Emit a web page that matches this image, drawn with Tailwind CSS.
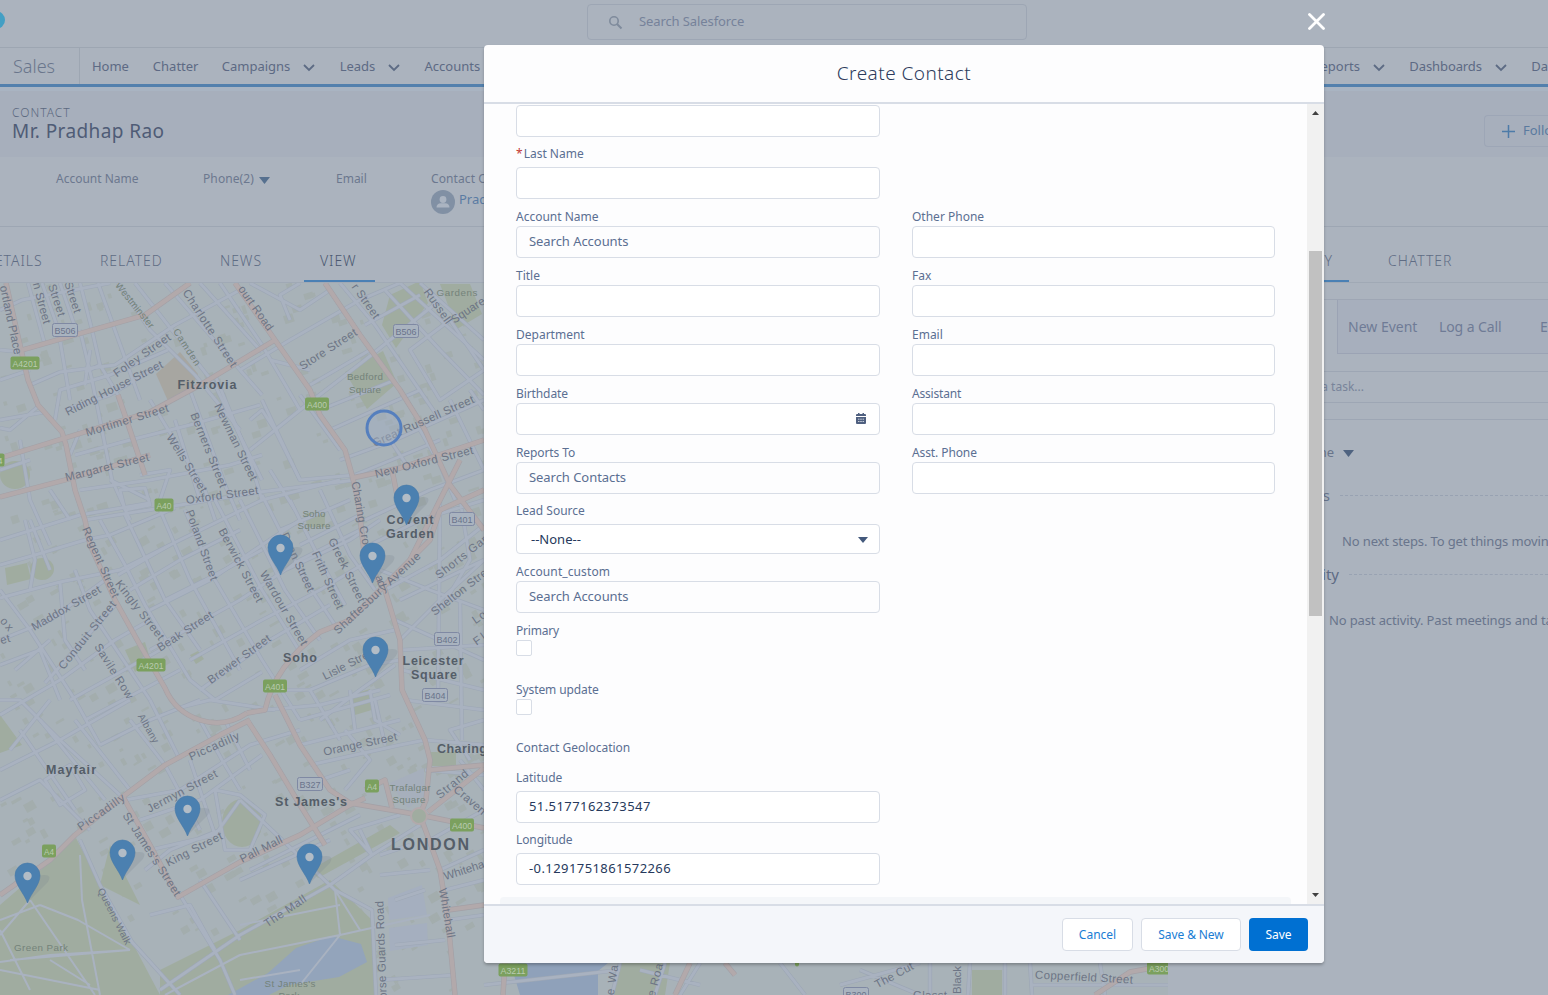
<!DOCTYPE html>
<html lang="en">
<head>
<meta charset="utf-8">
<title>Create Contact</title>
<script src="https://cdn.jsdelivr.net/npm/@tailwindcss/browser@4"></script>
</head>
<body class="relative h-[995px] w-[1548px] overflow-hidden bg-[#abb3be] font-['Noto_Sans',sans-serif] text-[13px] text-[#69758c]">

<!-- Page behind the dialog -->
<div class="flex h-[995px] w-[1548px] flex-col overflow-hidden whitespace-nowrap">
  <header class="flex h-[48px] shrink-0 border-b border-[#9da6b2]">
    <div class="mt-[11px] -ml-[13px] h-[18px] w-[18px] rounded-full bg-[#439fc4]"></div>
    <div class="mt-1 ml-[582px] flex h-9 w-[440px] items-center rounded border border-[#9da6b4] pl-5 text-[#76829a]">
      <svg class="h-[15px] w-[15px]" viewBox="0 0 15 15" fill="none" stroke="#7f8b9c" stroke-width="1.6"><circle cx="6" cy="6" r="4.2"/><path d="M9 9l4.5 4.5" stroke-width="2"/></svg>
      <span class="ml-4 tracking-[-0.1px]">Search Salesforce</span>
    </div>
  </header>
  <nav class="flex h-[39px] shrink-0 items-center border-b-[3px] border-[#5380ad] text-[13px] text-[#5d6a84]">
    <div class="flex h-full w-20 items-center border-r border-[#9da6b2] pl-[13px] text-[18px] font-light text-[#6a768c]">Sales</div>
    <div class="w-[61px] pt-px pl-3">Home</div>
    <div class="w-[69px] pt-px pl-3">Chatter</div>
    <div class="flex w-[118px] items-center pt-px pl-3">Campaigns<svg class="mt-[3px] ml-auto mr-[13px] h-3 w-3" viewBox="0 0 12 12" fill="none" stroke="#5d6b84" stroke-width="1.8"><path d="M1 3l5 5 5-5"/></svg></div>
    <div class="flex w-[85px] items-center pt-px pl-3">Leads<svg class="mt-[3px] ml-auto mr-[13px] h-3 w-3" viewBox="0 0 12 12" fill="none" stroke="#5d6b84" stroke-width="1.8"><path d="M1 3l5 5 5-5"/></svg></div>
    <div class="w-[901px] pt-px pl-3">Accounts</div>
    <div class="flex w-[85px] items-center pt-px">Reports<svg class="mt-[3px] ml-auto mr-[12px] h-3 w-3" viewBox="0 0 12 12" fill="none" stroke="#5d6b84" stroke-width="1.8"><path d="M1 3l5 5 5-5"/></svg></div>
    <div class="flex w-[122px] items-center pt-px pl-3 tracking-[-0.1px]">Dashboards<svg class="mt-[3px] ml-auto mr-[12px] h-3 w-3" viewBox="0 0 12 12" fill="none" stroke="#5d6b84" stroke-width="1.8"><path d="M1 3l5 5 5-5"/></svg></div>
    <div class="pt-px pl-3">Da</div>
  </nav>
  <section class="flex h-[70px] shrink-0 items-start justify-between border-t-4 border-[#a9b4c2] bg-[#a7afbc] pl-3">
    <div class="pt-[13px]">
      <div class="h-[17px] text-[12px] leading-[17px] font-light tracking-[1px] text-[#5c6980]">CONTACT</div>
      <div class="text-[19px] leading-[20px] tracking-[0.4px] text-[#4f5c76]">Mr. Pradhap Rao</div>
    </div>
    <div class="mt-6 flex h-8 w-[64px] items-center overflow-hidden rounded-l border border-r-0 border-[#9da6b6] pl-[17px] text-[#5a7a9f]">
      <svg class="h-[13px] w-[13px] shrink-0" viewBox="0 0 13 13" stroke="#4d7ba8" stroke-width="1.5"><path d="M6.500 0v13M0 6.500h13"/></svg><span class="ml-2">Follow</span>
    </div>
  </section>
  <section class="flex h-[70px] shrink-0 border-b border-[#9da6b3] pt-[13px] text-[12px] text-[#6c788f]">
    <div class="w-[147px] pl-14">Account Name</div>
    <div class="flex w-[133px] items-start pl-14"><span class="tracking-[0.1px]">Phone(2)</span><svg class="mt-[7px] ml-[5px] h-[7px] w-[11px] shrink-0" viewBox="0 0 11 7" fill="#56708f"><path d="M0 0h11L5.500 7z"/></svg></div>
    <div class="w-[151px] pl-14">Email</div>
    <div>
      <div class="tracking-[0.1px]">Contact Owner</div>
      <div class="mt-[2px] flex items-start text-[13px] text-[#5a7ba3]">
        <svg class="h-6 w-6" viewBox="0 0 24 24"><circle cx="12" cy="12" r="12" fill="#8190a4"/><circle cx="12" cy="9.500" r="3.400" fill="#abb4c1"/><path d="M5.500 17.500q0-4 4.500-4.200h4q4.500.2 4.500 4.200z" fill="#abb4c1"/></svg><span class="ml-1 leading-[19px]">Pradhap Rao</span>
      </div>
    </div>
  </section>
  <section class="flex h-14 shrink-0 border-b border-[#a0a9b5] text-[14px] font-light tracking-[0.95px] text-[#5f6c84]">
    <div class="flex h-[56px] w-[1184px]">
      <div class="-ml-[16px] w-[91px] pt-[23px]">DETAILS</div>
      <div class="w-[113px] pt-[23px] pl-[25px]">RELATED</div>
      <div class="w-[100px] pt-[23px] pl-8">NEWS</div>
      <div class="ml-[16px] h-[55px] w-[71px] border-b-2 border-[#4a80b4] pt-[23px] pl-[16px] text-[#4a5870]">VIEW</div>
    </div>
    <div class="flex w-[364px]">
      <div class="h-[55px] w-[165px] border-b-2 border-[#4a80b4] pt-[23px] pr-[16px] text-right">ACTIVITY</div>
      <div class="pt-[23px] pl-[39px]">CHATTER</div>
    </div>
  </section>
  <div class="flex min-h-0 flex-1">
    <svg id="map" class="block h-[712px] w-[1168px] shrink-0" viewBox="0 283 1168 712" font-family="Liberation Sans, Arial, sans-serif">
      <rect y="283" width="1168" height="712" fill="#a8b2b8"/>
      <g id="blocks" fill="#a3adad"></g>
      <g fill="#a0aca0">
        <path d="M0 905L50 862 76 838 100 885 132 942 160 995H0z"/>
        <path d="M160 970L240 930 330 880 372 920 376 995H160z"/>
        <path d="M345 372l38-21 14 32-30 26z"/><path d="M382 325l8-30 30-14 8 22-32 45z"/><path d="M440 284h30l12 30-25 15z"/>
        <path d="M0 715l22 30-22 8zM125 650l20-8 6 20-16 10z"/><ellipse cx="15" cy="475" rx="15" ry="14"/><ellipse cx="42" cy="569" rx="12" ry="11"/><path d="M5 568l22-5 4 16-24 6zM190 655l8-4 6 8-8 5zM305 513h20v14h-18z"/>
        <ellipse cx="242" cy="823" rx="20" ry="24"/><path d="M350 695l20-6 5 20-20 6zM430 752h26v14h-26z"/>
        <path d="M310 870l80-45 10 8-82 45zM100 885l10-40 30 60z"/><path d="M620 963h50l-5 32h-55zM972 970h30v25h-30z"/>
      </g>
      <path d="M156 374l24-22 18 22-8 18-22 9z" fill="#a7a6a1"/>
      <path d="M228 995l40-22 28-25 35-12 30 8 6 18-28 15-50 8-20 10z" fill="#93a4bb"/><path d="M518 963h90l-10 8v24h-78l-6-20z" fill="#8fa1ba"/>
      <path d="M388 898l34-13 5 30-38 5zM389 928l38-5 1 22-38 6z" fill="#a5afbf"/>
      <path d="M390 783l34-15v28l-16 12z" fill="#a6afbc"/>
      <g fill="none" stroke-linejoin="round">
        <g id="minor-case" stroke="#9da7b5" stroke-width="4.200"></g>
        <g id="minor-fill" stroke="#a9b2c0" stroke-width="2.900"></g>
        <g id="major-case" stroke="#a3a0a6" stroke-width="5.400"></g>
        <g id="major-fill" stroke="#b2a9ab" stroke-width="4.200"></g>
      </g>
      <circle cx="419" cy="816" r="8" fill="#a0aca0" stroke="#b2a9ab" stroke-width="2"/>
      <g id="labels" text-anchor="middle"></g>
      <circle cx="384" cy="428" r="17" fill="#9fadc1" fill-opacity=".5" stroke="#557fbe" stroke-width="3"/>
      <g id="pins"></g>
    </svg>
    <aside class="ml-4 flex w-[364px] shrink-0 flex-col pt-4">
      <div class="flex h-[55px] border-t border-[#9ea6b4] text-[14px] text-[#6f7b96]">
        <div class="w-[153px]"></div>
        <div class="flex h-[54px] flex-1 items-center overflow-hidden border-b border-l border-[#9ba3b4] bg-[#a7afbd] pb-px pl-[10px]"><span class="w-[91px] shrink-0">New Event</span><span class="w-[101px] shrink-0 tracking-[-0.1px]">Log a Call</span><span>Email</span></div>
      </div>
      <div class="mt-[17px] flex h-8 items-center border-y border-[#9da6b4] text-[12px] text-[#78849a]"><span class="w-[180px] text-right">Create a task...</span></div>
      <div class="mt-4 border-t border-[#9da6b4]"></div>
      <div class="mt-[23px] flex h-5 items-center text-[#69758b]"><span class="w-[150px] text-right">Activity Timeline</span><svg class="ml-[9px] h-[7px] w-[11px]" viewBox="0 0 11 7" fill="#4f6380"><path d="M0 0h11L5.500 7z"/></svg></div>
      <div class="mt-[22px] flex h-5 items-center text-[15px] text-[#67738b]"><span class="w-[146px] text-right">Next Steps</span><span class="ml-[10px] flex-1 border-t border-dashed border-[#98a2b2]"></span></div>
      <div class="mt-[26px] h-5 pl-[158px] leading-5 tracking-[-0.13px]">No next steps. To get things moving, add a task</div>
      <div class="mt-[13px] flex h-5 items-center text-[15px] text-[#5e6b84]"><span class="w-[155px] text-right">Past Activity</span><span class="ml-[10px] flex-1 border-t border-dashed border-[#98a2b2]"></span></div>
      <div class="mt-[26px] h-5 pl-[145px] leading-5 tracking-[-0.13px]">No past activity. Past meetings and tasks</div>
    </aside>
  </div>
</div>

<!-- Dialog -->
<div class="absolute inset-0 flex justify-center">
  <div class="relative mr-[-260px] mt-[45px] flex h-[918px] w-[840px] flex-col rounded bg-[#fdfdfe] shadow-[0_2px_3px_rgba(0,0,0,0.25)]">
    <button class="absolute -top-[32px] -right-px h-[17px] w-[17px]" aria-label="Close"><svg viewBox="0 0 17 17" fill="none" stroke="#fff" stroke-width="2.800" stroke-linecap="round"><path d="M1.500 1.500l14 14M15.500 1.500l-14 14"/></svg></button>
    <h2 class="flex h-[59px] shrink-0 items-center justify-center border-b-2 border-[#d8dde6] text-[19px] font-light tracking-[0.45px] text-[#2c3b5c]">Create Contact</h2>
    <div class="flex h-[800px] shrink-0">
      <div class="flex w-[823px] flex-col overflow-hidden text-[12px] text-[#5b6f92]">
        <div class="grid grid-cols-[364px_363px] gap-x-8 px-8">
          <div>
            <div class="mt-px h-8 rounded border border-[#d8dde6] bg-white"></div>
            <div class="mt-2 flex h-[18px] leading-[18px]"><span class="mr-px text-[#c23934]">*</span><span>Last Name</span></div>
            <div class="mt-1 h-8 rounded border border-[#d8dde6] bg-white"></div>
            <div class="mt-[9px] h-[18px] leading-[18px]">Account Name</div>
            <div class="flex h-8 items-center rounded border border-[#d8dde6] pl-3 text-[13px] tracking-[-0.05px]">Search Accounts</div>
            <div class="mt-[9px] h-[18px] leading-[18px]">Title</div>
            <div class="h-8 rounded border border-[#d8dde6] bg-white"></div>
            <div class="mt-[9px] h-[18px] leading-[18px]">Department</div>
            <div class="h-8 rounded border border-[#d8dde6] bg-white"></div>
            <div class="mt-[9px] h-[18px] leading-[18px] tracking-[-0.1px]">Birthdate</div>
            <div class="flex h-8 items-center justify-end rounded border border-[#d8dde6] bg-white pr-[13px] pb-px">
              <svg class="h-[11px] w-[10px]" viewBox="0 0 10 11"><path d="M2 0h1.500v1h3V0H8v1h1q1 0 1 1v1H0V2q0-1 1-1h1zM0 4h10v6q0 1-1 1H1q-1 0-1-1z" fill="#4f6080"/><path d="M2 6.200h1.500M4.200 6.200h1.600M6.500 6.200H8M2 8.500h1.500M4.200 8.500h1.600M6.500 8.500H8" stroke="#d5dae3" stroke-width=".9"/></svg>
            </div>
            <div class="mt-[9px] h-[18px] leading-[18px] tracking-[-0.1px]">Reports To</div>
            <div class="flex h-8 items-center rounded border border-[#d8dde6] pl-3 text-[13px] tracking-[-0.05px]">Search Contacts</div>
            <div class="mt-2 h-[18px] leading-[18px]">Lead Source</div>
            <div class="mt-1 flex h-[30px] items-center justify-between rounded border border-[#d8dde6] bg-white pt-px pr-[11px] pl-[14px] text-[13px] text-[#26395c]">--None--<svg class="h-[6px] w-[10px]" viewBox="0 0 10 6" fill="#43597c"><path d="M0 0h10L5 6z"/></svg></div>
            <div class="mt-[9px] h-[18px] leading-[18px] tracking-[0.1px]">Account_custom</div>
            <div class="flex h-8 items-center rounded border border-[#d8dde6] pl-3 text-[13px] tracking-[-0.05px]">Search Accounts</div>
            <div class="mt-[9px] h-[18px] leading-[18px] tracking-[-0.2px]">Primary</div>
            <div class="h-4 w-4 rounded-xs border border-[#d8dde6] bg-white"></div>
            <div class="mt-[25px] h-[18px] leading-[18px] tracking-[-0.1px]">System update</div>
            <div class="h-4 w-4 rounded-xs border border-[#d8dde6] bg-white"></div>
            <div class="mt-6 h-[18px] leading-[18px]">Contact Geolocation</div>
            <div class="mt-3 h-[18px] leading-[18px]">Latitude</div>
            <div class="mt-1 flex h-8 items-center rounded border border-[#d8dde6] bg-white pl-3 text-[13px] tracking-[0.42px] text-[#26395c]">51.5177162373547</div>
            <div class="mt-2 h-[18px] leading-[18px] tracking-[-0.1px]">Longitude</div>
            <div class="mt-1 flex h-8 items-center rounded border border-[#d8dde6] bg-white pl-3 text-[13px] tracking-[0.42px] text-[#26395c]">-0.1291751861572266</div>
          </div>
          <div class="pt-[95px]">
            <div class="mt-[9px] h-[18px] leading-[18px]">Other Phone</div>
            <div class="h-8 rounded border border-[#d8dde6] bg-white"></div>
            <div class="mt-[9px] h-[18px] leading-[18px]">Fax</div>
            <div class="h-8 rounded border border-[#d8dde6] bg-white"></div>
            <div class="mt-[9px] h-[18px] leading-[18px]">Email</div>
            <div class="h-8 rounded border border-[#d8dde6] bg-white"></div>
            <div class="mt-[9px] h-[18px] leading-[18px] tracking-[-0.2px]">Assistant</div>
            <div class="h-8 rounded border border-[#d8dde6] bg-white"></div>
            <div class="mt-[9px] h-[18px] leading-[18px] tracking-[-0.1px]">Asst. Phone</div>
            <div class="h-8 rounded border border-[#d8dde6] bg-white"></div>
          </div>
        </div>
        <div class="mx-4 mt-3 h-[7px] shrink-0 rounded-t bg-[#f4f6f9]"></div>
      </div>
      <div class="flex w-[17px] flex-col items-center bg-[#f1f1f1]">
        <svg class="mt-[7px] h-1 w-[7px]" viewBox="0 0 7 4" fill="#404040"><path d="M3.500 0L7 4H0z"/></svg>
        <div class="mt-[136px] h-[365px] w-[13px] bg-[#c1c1c1]"></div>
        <svg class="mt-auto mb-[7px] h-1 w-[7px]" viewBox="0 0 7 4" fill="#404040"><path d="M0 0h7L3.500 4z"/></svg>
      </div>
    </div>
    <footer class="flex h-[59px] shrink-0 items-center justify-end gap-2 rounded-b border-t-2 border-[#d8dde6] bg-[#f4f6fa] pr-4 text-[12px] text-[#1a7dd4]">
      <button class="h-[33px] w-[71px] rounded border border-[#d8dde6] bg-white">Cancel</button>
      <button class="h-[33px] w-[100px] rounded border border-[#d8dde6] bg-white tracking-[-0.1px]">Save &amp; New</button>
      <button class="h-[33px] w-[59px] rounded bg-[#0070d2] text-white">Save</button>
    </footer>
  </div>
</div>

<script>
const NS = 'http://www.w3.org/2000/svg';
const add = (parent, tag, attrs, text) => {
  const e = document.createElementNS(NS, tag);
  for (const k in attrs) e.setAttribute(k, attrs[k]);
  if (text) e.textContent = text;
  document.getElementById(parent).appendChild(e);
  return e;
};
// small building footprints
let seed = 7;
const rnd = () => (seed = (seed * 16807) % 2147483647) / 2147483647;
for (let i = 0; i < 620; i++) {
  const x = rnd() * 484, y = 283 + rnd() * 712, a = y < 520 ? -18 : -30, w = 3 + rnd() * 8, h = 2 + rnd() * 7;
  add('blocks', 'rect', { x, y, width: w, height: h, transform: `rotate(${a} ${x} ${y})` });
}
// side streets
const minor = [
 'M28 283L45 345M42 283L62 340M60 283L78 336M80 283L92 330 100 365 118 395M98 283L140 400M118 283L150 330 195 375 240 430',
 'M135 283L215 385 262 480M165 283L240 370 262 395M200 283L262 352M220 283L262 345M0 310L22 300 110 283M0 380L30 370M0 420L45 412M0 350L22 352',
 'M30 385L60 372 115 365 175 325 240 290M55 420L60 390 110 375 168 350M65 410L110 395 160 365M90 350L85 385M80 330L92 380 100 420 112 480 130 520',
 'M60 340L70 400M100 365L85 372M40 405L10 430 0 428M150 400L205 490 215 520M190 390L225 485 240 520M215 375L250 460 262 500M175 420L200 500',
 'M75 455L130 440 190 425 260 405M80 490L150 480 230 465 262 455M70 455L80 430M85 520L180 505 260 492 355 480M110 480L150 500M140 475L170 470 160 500',
 'M50 490L70 520M20 440L30 500 50 545M0 470L30 460M120 490L145 488 150 505 125 510zM262 345L300 410 250 450M300 410L365 360 440 300M240 370L290 340 360 300 400 283',
 'M250 283L300 310 330 290M290 320L280 295 300 283M340 283L375 325 440 420M365 325L420 295M385 290L440 350 484 395M400 283L484 360M420 283L484 340',
 'M310 385L370 350M320 410L395 380M330 430L420 390M340 460L395 440 484 400M355 475L440 440M300 395L340 450M270 360L310 370M275 430L300 480 355 475',
 'M262 400L300 480M250 420L262 410 275 430M270 470L295 510M390 440L410 470M420 430L440 465 455 500M450 400L484 470M470 390L484 410M410 350L450 320 484 370 440 400z',
 'M0 540L80 515 150 503M0 565L35 555 85 540 110 535 175 508M0 598L60 582 120 570 180 540 262 500 340 480M25 520L35 560 30 590M60 582L65 640 85 670M30 520L50 570M75 570L90 610 150 700',
 'M0 590L30 630 75 700 100 745M0 640L50 620 105 580M0 665L40 650 60 700M15 670L50 640M45 683L115 605M60 740L20 700 0 700M0 715L60 680 115 640 150 620',
 'M70 700L160 650M85 720L180 670M60 740L130 700M100 520L125 565 145 605 190 680 215 700M118 575L170 545M130 590L180 560 240 530M150 610L210 580 262 545 300 520',
 'M125 515L165 600 200 650M160 510L190 580 240 670M185 510L215 580 262 660 300 720M215 500L262 590 305 660M240 500L285 590 320 640M262 495L305 580 335 625M290 500L320 560 345 605M320 490L350 555 375 590',
 'M150 650L240 600 300 560 360 530M190 660L262 620 320 590 370 560M200 690L270 640 330 605M205 580L262 550M280 530L350 500M300 545L360 515M285 570L350 540 380 520M165 600L205 580M215 700L262 672',
 'M365 520L430 490 484 470M370 545L420 520 484 500M380 570L430 590 484 610M385 590L440 560 484 525M400 600L484 560M400 640L440 600 484 560M395 620L484 660M402 650L484 645M440 500L438 700M460 500L470 560 440 610M460 600L462 740',
 'M402 670L484 690M405 700L484 710M300 670L350 640 395 630M310 690L370 665 400 660M320 720L360 690 395 665M285 690L310 690 340 740M265 710L320 705 380 690M370 690L375 720 400 735M350 690L355 730',
 'M178 708L210 700 275 710M100 745L150 720 200 700M130 720L165 765M150 700L180 760M200 720L222 760 240 790M225 720L250 770M0 770L60 740M0 800L40 780 90 830M20 730L75 810M40 720L105 800M60 740L120 795M10 750L50 700',
 'M75 720L130 790M45 780L70 765 85 790 60 805zM125 800L180 790 250 745 300 730M140 820L200 800 262 755M150 850L215 835 240 800M145 870L170 850 220 830M165 765L200 830M190 760L215 835M215 790L240 795 265 815 250 850 225 850z',
 'M300 720L390 695M300 745L400 720M310 765L400 745 425 740M320 780L350 770M240 880L330 840M180 895L220 960 235 995M200 880L240 940',
 'M395 900L425 890M395 945L445 940M430 840L484 810M440 870L484 850M445 890L484 880M448 920L484 915M380 980L455 975M425 740L484 745M425 770L484 775M345 730L370 760 345 790M375 700L385 745M460 760L484 790M470 760L450 730 484 720',
 'M160 990L240 935 330 885 372 855 420 825M335 890L372 910 376 995M250 870L300 845 360 815M360 830L372 855 350 830 400 815M380 855L410 845M380 875L430 870M240 800L335 890M150 915L190 905 215 950M80 840L100 885 132 942 180 995',
 'M484 985L620 970M620 963L612 995M665 963L655 995M640 970L700 985M700 963L680 995M780 963L805 995M860 970L920 995M840 985L920 963M930 963L930 995M970 963L968 995M1005 963L1005 995M1030 985L1168 985M1030 963L1032 995M1100 963L1105 995'
];
// footpaths across the parks
const paths = [
 'M0 920L40 905M30 900L95 995M10 960L130 950M0 970L100 990M40 905L78 920 130 950M0 930L30 990M0 962L50 955 130 950M80 855L82 900 100 995M30 900L0 935M50 960L90 985',
 'M335 890L340 935 300 985M165 995L240 955 340 935 430 915M335 890L360 930M240 980L300 970M240 925L340 905'
];
const major = [
 'M6 283L20 345 28 380 38 405 62 432 66 445 75 490 85 520 90 545 115 600 140 645 165 688 Q175 712 200 720 T247 713',
 'M22 350L145 315 190 283','M0 458L65 438 150 412 200 385 250 355 275 340','M0 497L65 480 150 455','M118 395L130 430 145 475',
 'M235 283L275 340 310 390 320 415 345 450 352 475 358 500 365 560 385 590 400 640 402 690 425 740 430 760 426 800 420 815 440 870 448 920 455 995',
 'M325 283L360 335 400 390 425 430 450 485 484 530','M352 478L400 468 484 440','M392 470L400 510M440 510L484 490M460 460L440 500 410 560',
 'M247 713L265 710 Q275 665 320 632L350 620 390 580 430 540 440 510','M0 895L50 860 75 835 125 795 165 765 220 735 250 720',
 'M122 795L150 845 178 897 240 862 300 835 350 805 365 798','M275 695L300 745 330 790 350 803 420 815 484 828','M247 720L270 755 300 805 325 845',
 'M428 812L484 768M365 790L385 780 392 808M430 770L484 765M448 910L484 905','M505 963L503 995M690 963L675 995M725 963L735 975M1095 995L1130 972 1168 965'
];
minor.forEach(d => add('minor-case', 'path', { d }));
minor.forEach(d => add('minor-fill', 'path', { d }));
paths.forEach(d => add('minor-fill', 'path', { d, 'stroke-width': 2 }));
major.forEach(d => { add('major-case', 'path', { d }); add('major-fill', 'path', { d }); });
// street names: [text, x, y, angle, length, size]
[
 ['ortland Place',11,320,78,70],['n Street',42,303,75,42],['Street',57,300,72,33],['Street',73,297,72,32],['Charlotte Street',210,328,57,90],
 ['Foley Street',142,355,-35,67],['Riding House Street',114,388,-27,108],['Mortimer Street',127,420,-17,86],['Margaret Street',107,467,-14,86],
 ['Wells Street',187,463,58,66],['Berners Street',209,450,68,80],['Newman Street',236,442,64,84],['Oxford Street',222,495,-8,73],['Store Street',328,349,-33,66],
 ['ourt Road',256,308,55,52],['r Street',366,301,55,40],['Russell',438,306,55,40],['Square',468,310,-33,38],['Great Russell Street',423,421,-24,110],
 ['New Oxford Street',424,462,-14,101],['Charing Cro',361,513,80,64],['ad',381,581,70,12],['Poland Street',202,545,70,74],['Berwick Street',241,565,62,82],['Wardour Street',284,608,60,84],
 ['Dean Street',298,562,65,64],['Frith Street',328,580,66,62],['Greek Street',347,570,64,70],['Shaftesbury Avenue',377,593,-43,114],['Regent Street',101,562,66,76],
 ['Kingly Street',140,610,52,72],['Beak Street',185,631,-33,64],['Maddox Street',66,608,-30,78],['Conduit Street',87,635,-51,84],['Savile Row',114,671,58,63],
 ['Brewer Street',239,659,-36,75],['Albany',149,728,60,32,10],['Piccadilly',214,746,-24,54],['Piccadilly',101,812,-35,55],['Jermyn Street',182,791,-28,78],
 ["St James's Street",152,854,57,97],['King Street',194,849,-27,62],['Pall Mall',261,849,-27,46],['Queens Walk',115,916,63,62,10],['Orange Street',360,744,-12,75],
 ['Lisle Street',350,663,-27,60],['Shorts Gar',461,557,-38,62],['Shelton Stre',459,592,-38,68],['Lo',479,617,-35,14],['Fl',479,639,-35,12],['The Mall',285,911,-34,48],['orse Guards Road',381,950,-92,98],
 ['Whitehall',447,913,80,50],['Whiteha',464,870,-18,42],['Strand',452,784,-40,38],['Craven',470,800,40,38],['ox',7,624,50,14],['et',5,639,-15,10],
 ['The Cut',894,975,-28,42],['Black',957,980,-90,28],['Copperfield Street',1084,977,3,98],['e Wa',612,980,-82,30],['e Roa',655,980,-75,34],['Glasst',930,995,0,34]
].forEach(([t,x,y,a,l,s]) => add('labels','text',{transform:`translate(${x} ${y}) rotate(${a})`,dy:4,textLength:l,'font-size':s||11.5,fill:'#6d7585'},t));
// parks and boundaries
[
 ['Westminster',135,305,51,56],['Camden',187,347,57,42],['Gardens',457,292,0,41],['Bedford',365,376,0,36],['Square',365,389,0,32],['Soho',314,513,0,23],['Square',314,525,0,33],
 ['Trafalgar',410,787,0,41],['Square',409,799,0,33],['Green Park',41,947,0,54],["St James's",290,983,0,51],['Park',289,995,0,21]
].forEach(([t,x,y,a,l]) => add('labels','text',{transform:`translate(${x} ${y}) rotate(${a})`,dy:3.5,textLength:l,'font-size':9.8,fill:'#74837a'},t));
// districts
[
 ['Fitzrovia',207,385,59,12.5],['Covent',410,520,47,12.5],['Garden',410,534,48,12.5],['Soho',300,658,34,12.5],['Leicester',433,661,61,12.5],['Square',434,675,46,12.5],
 ['Charing',462,749,50,12.5],['Mayfair',71,770,50,12.5],["St James's",311,802,72,12.5],['LONDON',430,844,78,16]
].forEach(([t,x,y,l,s]) => add('labels','text',{x,y,dy:s*.35,textLength:l,'font-size':s,'font-weight':'bold',fill:'#555e68'},t));
// road number shields
[
 ['B506',65,330,0],['B506',406,331,0],['B401',462,519,0],['B402',447,639,0],['B404',435,695,0],['B327',310,784,0],['B300',856,994,0],
 ['A4201',25,363,1],['A4201',151,665,1],['A40',164,505,1],['A400',317,404,1],['A401',275,686,1],['A4',49,851,1],['A4',372,786,1],['A400',462,825,1],['4',0,460,1],['A3211',513,970,1],['A300',1159,968,1],['',797,960,1]
].forEach(([t,x,y,g]) => {
  const w = g ? (t.length * 5 + 4 || 22) : 25;
  add('labels','rect',{x:x-w/2,y:y-6.5,width:w,height:13,rx:2,fill:g?'#7ba05e':'#a9b3bf',stroke:g?'none':'#7f89a3'});
  add('labels','text',{x,y,dy:3.5,textLength:w-4,lengthAdjust:'spacingAndGlyphs','font-size':9.5,fill:g?'#b9cbb0':'#69738b'},t);
});
// location markers, given by their tips
[[406,525],[280,575],[372,583],[375,677],[187,836],[122,880],[27,903],[309,884]].forEach(([x,y]) => {
  add('pins','path',{d:`M${x} ${y}l20-20q6-8-3-8q-8 0-12 7z`,fill:'#7c8791','fill-opacity':.25});
  add('pins','path',{d:`M${x+.5} ${y}C${x-3} ${y-10} ${x-12} ${y-18} ${x-12} ${y-27.5}a12.500 12.500 0 0 1 25 0C${x+13} ${y-18} ${x+4} ${y-10} ${x+.5} ${y}z`,fill:'#4b80b0',stroke:'#4679a8','stroke-width':.6});
  add('pins','circle',{cx:x+.5,cy:y-27,r:4.2,fill:'#b2bcc6'});
});
</script>
</body>
</html>
